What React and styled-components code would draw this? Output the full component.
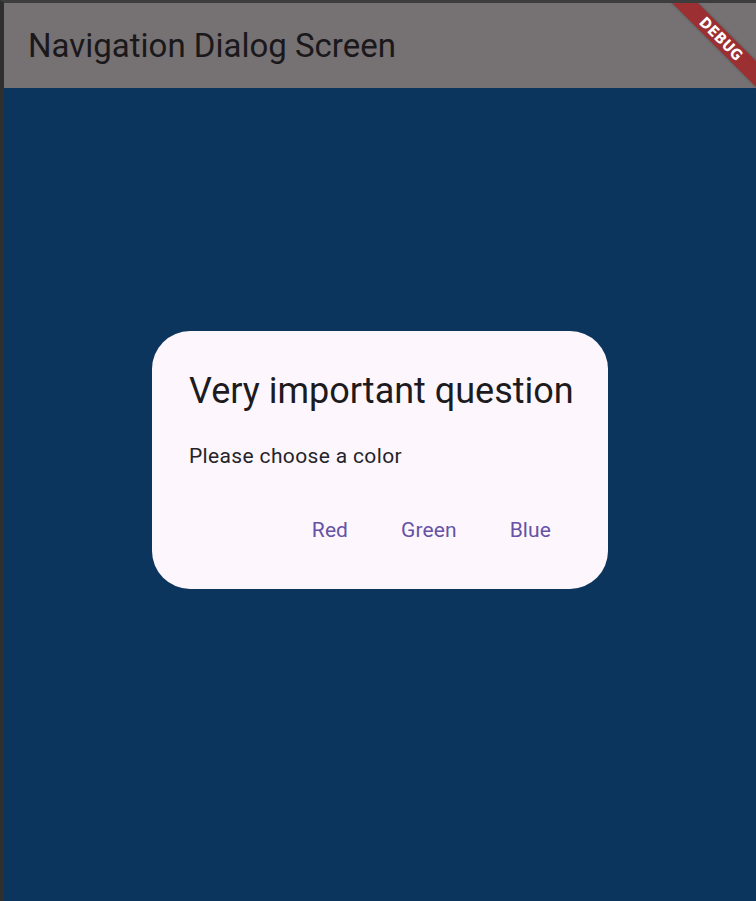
import React from 'react'
import styled, { createGlobalStyle } from 'styled-components'

const GlobalStyle = createGlobalStyle`
  html, body {
    margin: 0;
    padding: 0;
    background: #3c3c3c;
  }
  #root {
    height: 901px;
  }
`

const Window = styled.div`
  position: relative;
  height: 901px;
  box-sizing: border-box;
  border-top: 3px solid #3d3d3d;
  border-left: 4px solid #2f2f2f;
  display: flex;
  flex-direction: column;
  overflow: hidden;
  font-family: Roboto, "Noto Sans", sans-serif;
`

const AppBar = styled.header`
  height: 85px;
  flex-shrink: 0;
  background: #767172;
  display: flex;
  align-items: center;
  padding-left: 24px;
`

const AppTitle = styled.h1`
  margin: 0;
  font-size: 33px;
  font-weight: 400;
  color: #1a181b;
`

const Body = styled.main`
  flex: 1;
  background: #0b355d;
  display: flex;
  justify-content: center;
  align-items: flex-start;
  padding-top: 243px;
`

const Dialog = styled.div`
  width: 456px;
  height: 258px;
  box-sizing: border-box;
  background: #fdf7fd;
  border-radius: 38px;
  padding: 38px 37px 0;
  display: flex;
  flex-direction: column;
`

const DialogTitle = styled.h2`
  margin: 0;
  font-size: 36px;
  font-weight: 400;
  color: #1d1b20;
  line-height: 44px;
  white-space: nowrap;
`

const DialogContent = styled.p`
  margin: 29px 0 0;
  font-size: 21px;
  letter-spacing: 0.35px;
  color: #25232a;
  line-height: 28px;
`

const Actions = styled.div`
  display: flex;
  justify-content: flex-end;
  gap: 13px;
  margin-top: 38px;
`

const TextButton = styled.button`
  border: none;
  background: transparent;
  font-family: Roboto, "Noto Sans", sans-serif;
  font-size: 21px;
  line-height: 28px;
  letter-spacing: 0.1px;
  color: #6652a6;
  padding: 8px 20px;
  cursor: pointer;
`

const Banner = styled.div`
  position: absolute;
  top: 27px;
  right: -30px;
  width: 130px;
  height: 18px;
  background: #9c2f31;
  transform: rotate(45deg);
  display: flex;
  align-items: center;
  justify-content: center;
  color: #ffffff;
  font-family: "DejaVu Sans Condensed", "DejaVu Sans", sans-serif;
  font-weight: 700;
  font-size: 15px;
  letter-spacing: 0.3px;
  box-shadow: 0 0 3px rgba(0, 0, 0, 0.3);
`

export default function App() {
  return (
    <>
      <GlobalStyle />
      <Window>
        <AppBar>
          <AppTitle>Navigation Dialog Screen</AppTitle>
        </AppBar>
        <Body>
          <Dialog>
            <DialogTitle>Very important question</DialogTitle>
            <DialogContent>Please choose a color</DialogContent>
            <Actions>
              <TextButton>Red</TextButton>
              <TextButton>Green</TextButton>
              <TextButton>Blue</TextButton>
            </Actions>
          </Dialog>
        </Body>
        <Banner>DEBUG</Banner>
      </Window>
    </>
  )
}
